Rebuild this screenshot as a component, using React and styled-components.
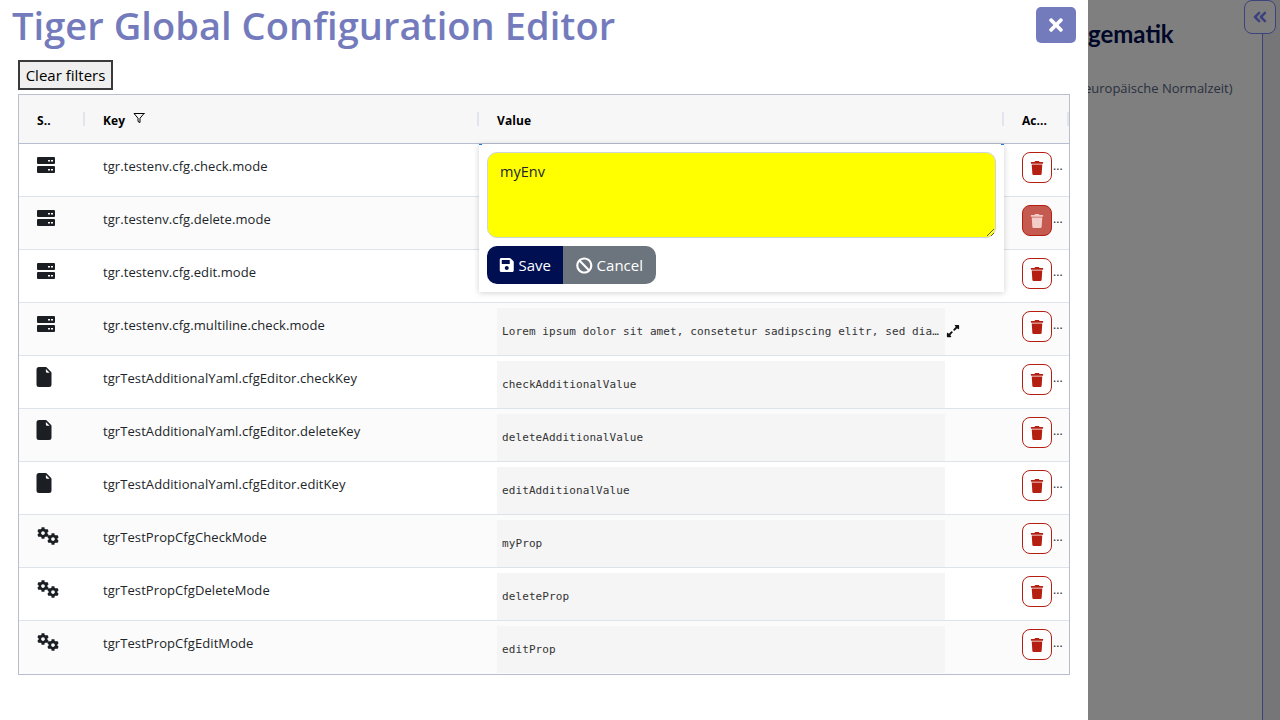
import React from 'react';
import styled, { createGlobalStyle } from 'styled-components';
import { FaTrash, FaSave, FaBan, FaTimes, FaExpandAlt, FaCog } from 'react-icons/fa';
import { BsFileEarmarkFill } from 'react-icons/bs';
import { FiFilter, FiChevronsLeft } from 'react-icons/fi';

const rows = [
  { source: 'env', key: 'tgr.testenv.cfg.check.mode', value: '' },
  { source: 'env', key: 'tgr.testenv.cfg.delete.mode', value: '', hovered: true },
  { source: 'env', key: 'tgr.testenv.cfg.edit.mode', value: '' },
  { source: 'env', key: 'tgr.testenv.cfg.multiline.check.mode', value: 'Lorem ipsum dolor sit amet, consetetur sadipscing elitr, sed diam nonumy eirmod tempor', expand: true },
  { source: 'file', key: 'tgrTestAdditionalYaml.cfgEditor.checkKey', value: 'checkAdditionalValue' },
  { source: 'file', key: 'tgrTestAdditionalYaml.cfgEditor.deleteKey', value: 'deleteAdditionalValue' },
  { source: 'file', key: 'tgrTestAdditionalYaml.cfgEditor.editKey', value: 'editAdditionalValue' },
  { source: 'prop', key: 'tgrTestPropCfgCheckMode', value: 'myProp' },
  { source: 'prop', key: 'tgrTestPropCfgDeleteMode', value: 'deleteProp' },
  { source: 'prop', key: 'tgrTestPropCfgEditMode', value: 'editProp' },
];

function ServerIcon () {
  return (
    <ServerSvg viewBox="0 0 18 16" width="18" height="16">
      <rect x="0" y="0" width="18" height="7" rx="1" fill="currentColor" />
      <rect x="0" y="9" width="18" height="7" rx="1" fill="currentColor" />
      <rect x="11" y="3" width="2" height="1.5" fill="#fff" />
      <rect x="14" y="3" width="2" height="1.5" fill="#fff" />
      <rect x="11" y="12" width="2" height="1.5" fill="#fff" />
      <rect x="14" y="12" width="2" height="1.5" fill="#fff" />
    </ServerSvg>
  );
}

function SourceIcon ({ source }) {
  if (source === 'env') return <ServerIcon />;
  if (source === 'file') return <FileIcon />;
  return (
    <GearPair>
      <FaCog />
      <FaCog />
    </GearPair>
  );
}

function App () {
  return (
    <>
      <GlobalStyle />
      <Page>
        <PageHeader>
          <Brand>gematik</Brand>
          <TimeZone>(mitteleuropäische Normalzeit)</TimeZone>
        </PageHeader>
        <SideRail>
          <CollapseButton><FiChevronsLeft /></CollapseButton>
        </SideRail>
      </Page>
      <Backdrop />
      <Modal>
        <TitleRow>
          <Title>Tiger Global Configuration Editor</Title>
          <CloseButton><FaTimes /></CloseButton>
        </TitleRow>
        <ClearButton>Clear filters</ClearButton>
        <Table>
          <HeaderRow>
            <HeadCell>S..</HeadCell>
            <HeadCell>Key <FilterIcon /></HeadCell>
            <HeadCell>Value</HeadCell>
            <HeadCell>Ac...</HeadCell>
          </HeaderRow>
          {rows.map((row, index) => (
            <Row key={row.key} $even={index % 2 === 1}>
              <IconCell><SourceIcon source={row.source} /></IconCell>
              <KeyCell>{row.key}</KeyCell>
              <ValueCell>
                {row.value && <ValueBox><ValueText>{row.value}</ValueText></ValueBox>}
                {row.expand && <ExpandIcon />}
              </ValueCell>
              <ActionCell>
                <DeleteButton $hovered={row.hovered}><FaTrash /></DeleteButton>
                <Dots>...</Dots>
              </ActionCell>
            </Row>
          ))}
          <Editor>
            <EditArea defaultValue="myEnv" />
            <EditButtons>
              <SaveButton><FaSave /> Save</SaveButton>
              <CancelButton><FaBan /> Cancel</CancelButton>
            </EditButtons>
          </Editor>
        </Table>
      </Modal>
    </>
  );
}

const GlobalStyle = createGlobalStyle`
  html, body {
    margin: 0;
    height: 100%;
    overflow: hidden;
    background: #fff;
    font-family: "Open Sans", "Noto Sans", sans-serif;
  }
`;

const Page = styled.div`
  display: flex;
  justify-content: space-between;
  height: 720px;
  background: #fff;
`;

const PageHeader = styled.div`
  flex: 1;
  padding: 17px 0 0 1088px;
`;

const Brand = styled.div`
  font-family: Lato, "Open Sans", sans-serif;
  font-size: 24px;
  font-weight: 700;
  line-height: 34px;
  color: #000e52;
`;

const TimeZone = styled.div`
  margin: 28px 0 0 -43px;
  font-size: 13px;
  line-height: 19px;
  color: #53627c;
  white-space: nowrap;
`;

const SideRail = styled.div`
  position: relative;
  width: 17px;
  border-left: 1px solid #7a84ff;
  background: #ededf0;
`;

const CollapseButton = styled.div`
  position: absolute;
  top: 0;
  left: -19px;
  width: 30px;
  height: 32px;
  border: 1px solid #7a84ff;
  border-radius: 8px;
  display: flex;
  align-items: center;
  justify-content: center;
  color: #7a84ff;
  background: #fff;
  font-size: 20px;

  svg {
    stroke-width: 3;
  }
`;

const Backdrop = styled.div`
  position: fixed;
  inset: 0;
  background: rgba(0, 0, 0, 0.5);
`;

const Modal = styled.div`
  position: fixed;
  top: 0;
  left: 0;
  bottom: 0;
  width: 1088px;
  box-sizing: border-box;
  background: #fff;
  padding: 0 18px;
`;

const TitleRow = styled.div`
  display: flex;
  justify-content: space-between;
  height: 60px;
  margin-left: -6px;
`;

const Title = styled.h1`
  margin: 0;
  font-size: 38px;
  line-height: 51px;
  letter-spacing: 0.06px;
  font-weight: 600;
  color: #747bbd;
`;

const CloseButton = styled.button`
  width: 40px;
  height: 36px;
  margin: 7px -6px 0 0;
  border: 0;
  border-radius: 5px;
  background: #747bbd;
  color: #fff;
  font-size: 20px;
  display: flex;
  align-items: center;
  justify-content: center;
  padding: 0;
`;

const ClearButton = styled.button`
  display: block;
  width: 95px;
  height: 30px;
  padding: 0;
  box-sizing: border-box;
  border: 2px solid #3a3a3a;
  background: #efefef;
  color: #000;
  font-family: inherit;
  font-size: 15px;
`;

const Table = styled.div`
  position: relative;
  width: 1052px;
  box-sizing: border-box;
  margin-top: 4px;
  border: 1px solid #b8bdd0;
  font-size: 13px;
  letter-spacing: 0.08px;
  color: #212529;
`;

const Columns = styled.div`
  display: grid;
  grid-template-columns: 66px 394px 525px 65px;
`;

const HeaderRow = styled(Columns)`
  height: 48px;
  background: #f7f7f8;
  border-bottom: 1px solid #b8bdd0;
`;

const HeadCell = styled.div`
  position: relative;
  display: flex;
  align-items: center;
  gap: 8px;
  padding: 2px 0 0 18px;
  font-size: 12px;
  font-weight: 700;
  color: #000;

  &::after {
    content: '';
    position: absolute;
    right: 0;
    top: 17px;
    height: 14px;
    width: 2px;
    background: #e2e5ee;
  }
`;

const FilterIcon = styled(FiFilter)`
  font-size: 12px;
  margin-top: -5px;
`;

const Row = styled(Columns)`
  height: 52px;
  border-bottom: 1px solid #dee2ea;
  background: ${(props) => (props.$even ? '#fbfbfb' : '#fff')};

  &:nth-last-child(2) {
    border-bottom: 0;
    height: 53px;
  }
`;

const IconCell = styled.div`
  padding: 13px 0 0 18px;
  color: #1b1f24;
  line-height: 1;
`;

const ServerSvg = styled.svg`
  display: block;
`;

const FileIcon = styled(BsFileEarmarkFill)`
  display: block;
  font-size: 20px;
  margin: -2px 0 0 -3px;
`;

const GearPair = styled.div`
  position: relative;
  width: 22px;
  height: 19px;
  margin-top: -1px;
  font-size: 12px;

  svg {
    position: absolute;
    left: 0;
    top: 0;
  }

  svg + svg {
    left: 10px;
    top: 6px;
  }
`;

const KeyCell = styled.div`
  padding: 13px 0 0 18px;
`;

const ValueCell = styled.div`
  display: flex;
  align-items: flex-start;
  padding: 5px 0 0 18px;
`;

const ValueBox = styled.div`
  box-sizing: border-box;
  width: 448px;
  height: 47px;
  padding: 0 5px;
  background: #f5f5f6;
`;

const ValueText = styled.div`
  width: 438px;
  font-family: "DejaVu Sans Mono", monospace;
  font-size: 11px;
  letter-spacing: 0.1px;
  line-height: 47px;
  color: #333;
  white-space: nowrap;
  overflow: hidden;
  text-overflow: ellipsis;
`;

const ExpandIcon = styled(FaExpandAlt)`
  font-size: 14px;
  color: #111;
  margin: 16px 0 0 1px;
`;

const ActionCell = styled.div`
  display: flex;
  align-items: flex-start;
  padding: 8px 0 0 18px;
`;

const DeleteButton = styled.button`
  width: 30px;
  height: 31px;
  padding: 0;
  border: 1px solid #b51f12;
  border-radius: 8px;
  background: ${(props) => (props.$hovered ? '#c55a50' : '#fff')};
  color: ${(props) => (props.$hovered ? '#f3cdc9' : '#b51f12')};
  display: flex;
  align-items: center;
  justify-content: center;
  font-size: 14px;
`;

const Dots = styled.span`
  margin: 5px 0 0 1px;
  font-size: 12px;
  color: #212529;
`;

const Editor = styled.div`
  position: absolute;
  left: 460px;
  top: 49px;
  width: 525px;
  height: 148px;
  box-sizing: border-box;
  padding: 8px;
  background: #fff;
  box-shadow: 0 1px 6px rgba(0, 0, 0, 0.18);

  &::before,
  &::after {
    content: '';
    position: absolute;
    top: 0;
    width: 3px;
    height: 1px;
    background: #1a73e8;
  }

  &::before {
    left: 0;
  }

  &::after {
    right: 0;
  }
`;

const EditArea = styled.textarea`
  display: block;
  width: 509px;
  height: 86px;
  box-sizing: border-box;
  padding: 9px 12px;
  border: 1px solid #ced4da;
  border-radius: 10px;
  background: #ff0;
  color: #212529;
  font-family: inherit;
  font-size: 14.5px;
`;

const EditButtons = styled.div`
  display: flex;
  margin-top: 8px;
`;

const EditButton = styled.button`
  display: flex;
  align-items: center;
  gap: 4px;
  height: 38px;
  box-sizing: border-box;
  border: 0;
  color: #fff;
  font-family: inherit;
  font-size: 15px;

  svg {
    font-size: 16px;
  }
`;

const SaveButton = styled(EditButton)`
  width: 76px;
  padding: 0 12px;
  background: #000e52;
  border-radius: 10px 0 0 10px;
`;

const CancelButton = styled(EditButton)`
  width: 93px;
  padding: 0 13px;
  background: #6c757d;
  border-radius: 0 10px 10px 0;

  svg {
    font-size: 17px;
  }
`;

export default App;
